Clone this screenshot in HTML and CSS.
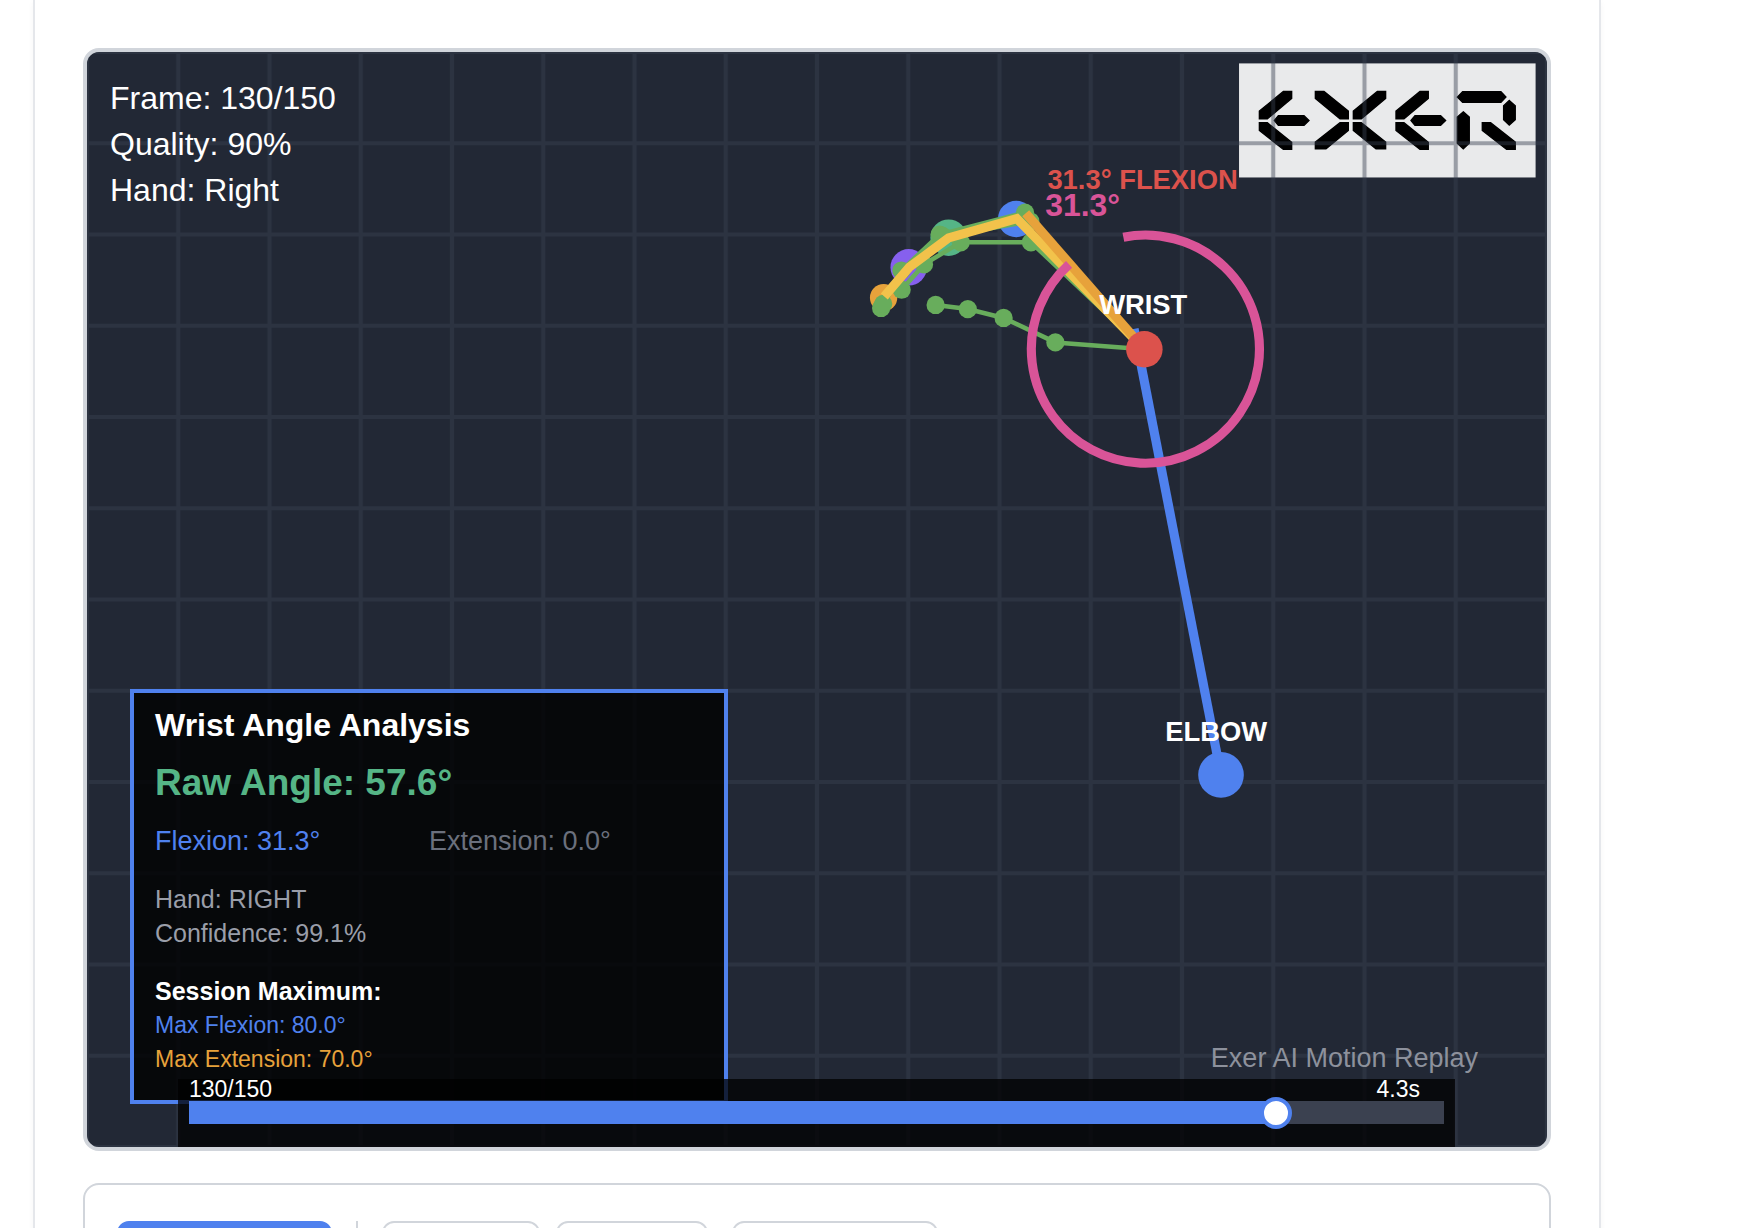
FILE: index.html
```html
<!DOCTYPE html>
<html lang="en">
<head>
<meta charset="utf-8">
<meta name="viewport" content="width=device-width, initial-scale=1">
<title>Exer AI Motion Replay</title>
<link rel="stylesheet" href="styles.css">
</head>
<body>
<main class="card">
  <section class="stage">
    <svg class="scene" viewBox="0 0 640 480" role="img" aria-label="Wrist and elbow tracking">
      <defs>
        <pattern id="grid" width="40" height="40" patternUnits="userSpaceOnUse">
          <path class="grid-line" d="M0 0H40V.9H.9V40H0ZM39.1 .9H40V40H39.1ZM.9 39.1H39.1V40H.9Z"/>
        </pattern>
      </defs>

      <!-- brand plate -->
      <rect class="plate" x="505" y="5" width="130" height="50"/>
      <svg class="logo" x="505" y="5" width="130" height="50" viewBox="57 69 890 342">
        <g id="logo-e">
          <path d="M215 153H190L118 212V235H142L215 174Z"/>
          <path d="M118 247H142L215 306V327H190L118 270Z"/>
          <path d="M163 240L175 226H252L267 240L252 255H175Z"/>
        </g>
        <path d="M286 153H312L385 212V235H360L286 174Z"/>
        <path d="M385 247H360L286 305V325H318L385 270Z"/>
        <path d="M497 153H472L400 212V235H424L497 174Z"/>
        <path d="M400 247H424L497 305V325H468L400 270Z"/>
        <use href="#logo-e" x="410"/>
        <path d="M712 170L728 154H843L858 170L843 186H728Z"/>
        <path d="M868 180L886 196V238L868 254L851 238V196Z"/>
        <path d="M730 214L748 230V308L730 325L712 308V230Z"/>
        <path d="M787 247H812L886 305V327H860L787 270Z"/>
      </svg>

      <rect width="640" height="480" fill="url(#grid)"/>

      <!-- forearm -->
      <path class="bone blue" d="M459 121.4L497.1 316.9"/>

      <!-- tracked joints -->
      <circle class="joint-blue" cx="407.3" cy="73.2" r="8"/>
      <circle class="joint-teal" cx="377.7" cy="81.4" r="8"/>
      <circle class="joint-purple" cx="360.2" cy="94.4" r="8"/>
      <circle class="joint-orange" cx="349.2" cy="107.7" r="6"/>

      <!-- hand landmarks -->
      <g class="hand">
        <path d="M463.5 130.3L424.5 127.3L401.8 116.6L386.1 112.7L372 110.9"/>
        <path d="M463.5 130.3L411.2 70.4L373.8 80L357 95.8L348.1 111.5"/>
        <path d="M463.5 130.3L413.5 74.2L376 80.8L358 95.8L349 110.5"/>
        <path d="M463.5 130.3L413.8 83.4H383L366.9 93.1L357.1 104.2"/>
      </g>
      <g class="dots">
        <circle cx="424.5" cy="127.3" r="4"/><circle cx="401.8" cy="116.6" r="4"/>
        <circle cx="386.1" cy="112.7" r="4"/><circle cx="372" cy="110.9" r="4"/>
        <circle cx="411.2" cy="70.4" r="4"/><circle cx="413.5" cy="74.2" r="4"/>
        <circle cx="373.8" cy="80" r="4"/><circle cx="375" cy="80.6" r="4"/>
        <circle cx="357" cy="95.8" r="4"/><circle cx="348.1" cy="112.2" r="4"/>
        <circle cx="349" cy="110.4" r="4"/><circle cx="413.8" cy="83.4" r="4"/>
        <circle cx="383" cy="83.4" r="4"/><circle cx="366.9" cy="93.1" r="4"/>
        <circle cx="357.1" cy="104.2" r="4"/>
      </g>

      <path class="bone yellow" d="M463.5 130.3L407.6 73L377.7 81.5L360.5 94.3L349.5 107.2"/>
      <path class="bone orange" d="M463.5 130.3L411.5 70.7"/>
      <path class="bone pink" d="M454.3 81.2A50 50 0 1 1 430.5 93.1"/>
      <circle class="joint-red" cx="463.5" cy="130.3" r="8"/>
      <circle class="joint-blue" cx="497.1" cy="316.9" r="10"/>

      <text class="label red" x="421" y="60">31.3° FLEXION</text>
      <text class="label angle" x="420" y="72">31.3°</text>
      <text class="label middle" x="463" y="115">WRIST</text>
      <text class="label middle" x="495" y="302">ELBOW</text>
    </svg>

    <div class="status">
      <div>Frame: 130/150</div>
      <div>Quality: 90%</div>
      <div>Hand: Right</div>
    </div>

    <section class="analysis">
      <h2 class="analysis-title">Wrist Angle Analysis</h2>
      <p class="raw">Raw Angle: 57.6°</p>
      <div class="motion">
        <span class="flexion">Flexion: 31.3°</span>
        <span class="extension">Extension: 0.0°</span>
      </div>
      <div class="details">
        <p>Hand: RIGHT</p>
        <p>Confidence: 99.1%</p>
      </div>
      <div class="session">
        <h3 class="session-title">Session Maximum:</h3>
        <p class="max-flexion">Max Flexion: 80.0°</p>
        <p class="max-extension">Max Extension: 70.0°</p>
      </div>
    </section>

    <p class="watermark">Exer AI Motion Replay</p>

    <div class="scrubber">
      <div class="times">
        <label for="frame">130/150</label>
        <span>4.3s</span>
      </div>
      <div class="track" style="--progress: 86.6%">
        <input class="seek" id="frame" type="range" min="1" max="150" value="130">
      </div>
    </div>
  </section>

  <section class="toolbar">
    <button class="btn primary" type="button" aria-label="Play"></button>
    <span class="divider"></span>
    <div class="group">
      <button class="btn back" type="button" aria-label="Back"></button>
      <button class="btn next" type="button" aria-label="Next"></button>
    </div>
    <button class="btn reset" type="button" aria-label="Reset"></button>
  </section>
</main>
</body>
</html>
```
FILE: styles.css
```css
* {
  box-sizing: border-box;
}

body {
  margin: 0;
  height: 100vh;
  overflow: hidden;
  background: #fff;
  font-family: "Liberation Sans", Arial, sans-serif;
}

h2, h3, p {
  margin: 0;
  font-size: inherit;
}

.card {
  display: flex;
  flex-direction: column;
  gap: 32px;
  margin: 0 153px 0 33px;
  padding: 48px;
  border: 2px solid #e5e7eb;
  border-width: 0 2px;
  background: #fff;
  box-shadow: 0 2px 6px rgba(0, 0, 0, 0.04);
}

/* replay stage */
.stage {
  position: relative;
  overflow: hidden;
  border: 4px solid #d1d5db;
  border-radius: 16px;
  background: #222835;
  color: #fff;
}

.scene {
  display: block;
  width: 100%;
  height: auto;
}

.plate { fill: #fff; opacity: 0.9; }
.logo { stroke: #000; stroke-width: 4; }
.grid-line { fill: #374151; opacity: 0.45; }

.bone { fill: none; stroke-width: 4; }
.blue { stroke: #4f81ee; }
.yellow { stroke: #f2c24b; }
.orange { stroke: #e7a23b; }
.pink { stroke: #d95498; }

.hand { fill: none; stroke: #68ad5c; stroke-width: 2; }
.dots { fill: #68ad5c; }
.joint-blue { fill: #4f81ee; }
.joint-teal { fill: #55b586; }
.joint-purple { fill: #8660ee; }
.joint-orange { fill: #e7a23b; }
.joint-red { fill: #dc524c; }

.label { fill: #fff; font-size: 12px; font-weight: 700; }
.middle { text-anchor: middle; }
.red { fill: #dc524c; }
.angle { fill: #d95498; font-size: 14px; }

.status {
  position: absolute;
  top: 23px;
  left: 23px;
  font-size: 32px;
  line-height: 46px;
}

/* angle read-out */
.analysis {
  position: absolute;
  bottom: 43px;
  left: 43px;
  display: flex;
  flex-direction: column;
  gap: 24px;
  width: 598px;
  padding: 15px 21px 24px;
  border: 4px solid #4f81ee;
  background: rgba(0, 0, 0, 0.8);
  font-size: 25px;
  line-height: 34px;
}

.analysis-title { font-size: 32px; }
.raw { color: #55b586; font-size: 37px; font-weight: 700; }
.motion { display: grid; grid-template-columns: 274px 1fr; font-size: 27px; }
.flexion { color: #4f81ee; }
.extension { color: #6b707d; }
.details { color: #9a9ea9; }
.max-flexion { color: #4f81ee; font-size: 23px; }
.max-extension { color: #e7a23b; font-size: 23px; }

.watermark {
  position: absolute;
  right: 69px;
  bottom: 72px;
  color: #8d919c;
  font-size: 27px;
  line-height: 34px;
}

/* scrubber */
.scrubber {
  position: absolute;
  right: 92px;
  bottom: 0;
  left: 91px;
  padding: 0 11px 23px;
  background: rgba(0, 0, 0, 0.75);
  font-size: 23px;
  line-height: 20px;
}

.times {
  display: flex;
  justify-content: space-between;
  padding: 0 24px 2px 0;
}

.track {
  display: flex;
  align-items: center;
  height: 23px;
  background: linear-gradient(to right, #4f81ee var(--progress), #3b4150 var(--progress));
}

.seek {
  flex: none;
  width: calc(100% + 32px);
  height: 32px;
  margin: 0 -16px;
  appearance: none;
  background: transparent;
}

.seek::-webkit-slider-thumb {
  width: 32px;
  height: 32px;
  appearance: none;
  border: 4px solid #4f81ee;
  border-radius: 50%;
  background: #fff;
}

/* playback controls */
.toolbar {
  display: flex;
  align-items: center;
  gap: 24px;
  padding: 36px 32px;
  border: 2px solid #d1d5db;
  border-radius: 16px;
}

.group { display: flex; gap: 16px; }

.btn {
  height: 72px;
  padding: 0;
  border: 2px solid #d1d5db;
  border-radius: 12px;
  background: #fff;
}

.primary { width: 215px; border-color: #4f81ee; background: #4f81ee; }
.back { width: 158px; }
.next { width: 152px; }
.reset { width: 206px; }

.divider { align-self: stretch; width: 2px; background: #d1d5db; }
```
